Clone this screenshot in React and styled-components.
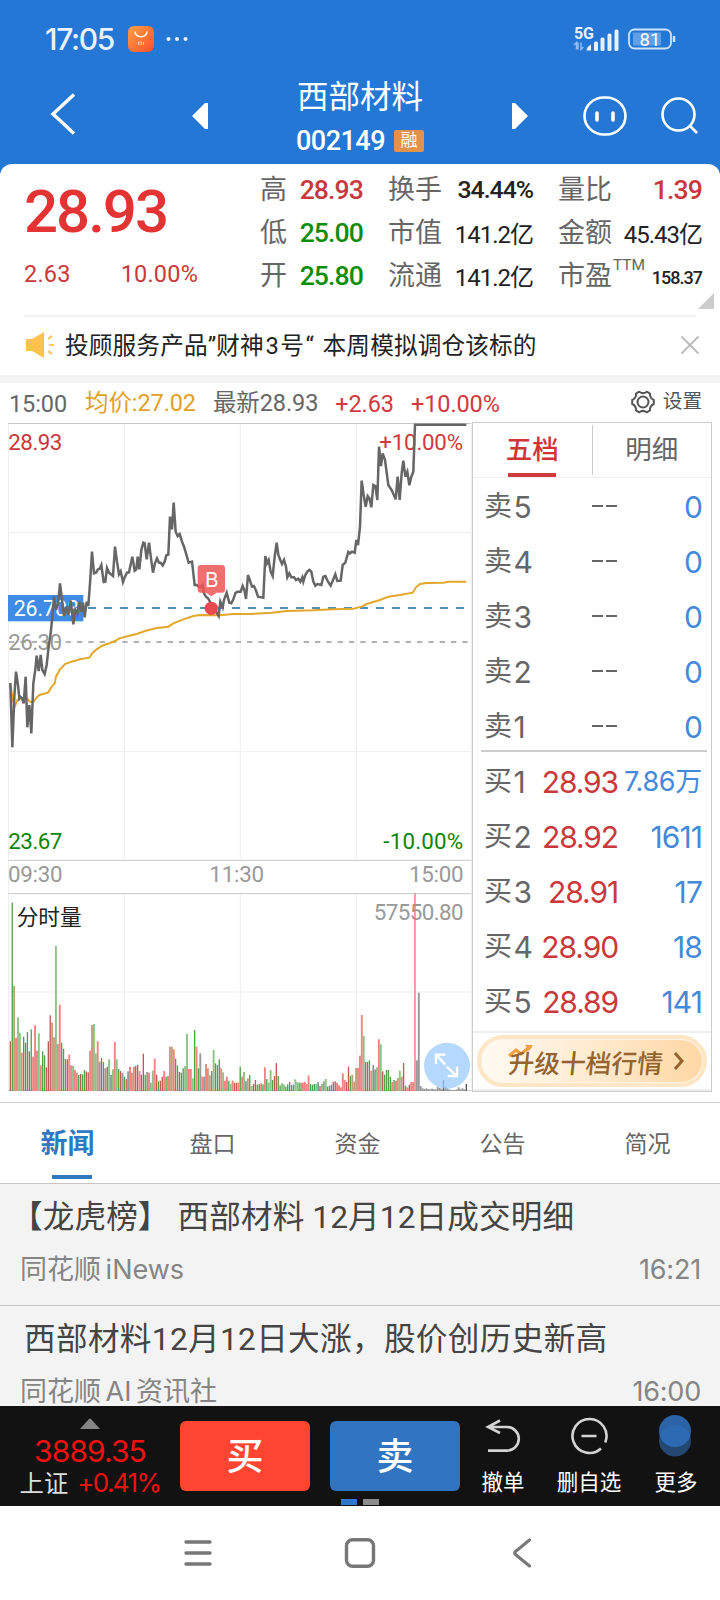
import styled, { createGlobalStyle, css } from 'styled-components';

const GlobalStyle = createGlobalStyle`
  * {
    box-sizing: border-box;
  }

  body {
    margin: 0;
    background: #fff;
    font-family: Roboto, 'Noto Sans CJK SC', sans-serif;
    color: #222;
  }
`;

const uiFont = css`
  font-family: Inter, 'Noto Sans CJK SC', sans-serif;
`;

const Screen = styled.div`
  width: 720px;
  height: 1600px;
  overflow: hidden;
  display: flex;
  flex-direction: column;
  white-space: nowrap;
`;

/* ---------- header ---------- */

const Header = styled.header`
  height: 174px;
  flex: none;
  background: #2577d5;
  color: #fff;
`;

const StatusBar = styled.div`
  height: 76px;
  padding: 2px 44px 0 45px;
  display: flex;
  align-items: center;
  ${uiFont}
`;

const Clock = styled.span`
  width: 83px;
  font-size: 30px;
  font-weight: 500;
  letter-spacing: -1.3px;
  color: #e8f2fd;
`;

const StatusIcons = styled.div`
  margin-left: auto;
  display: flex;
  align-items: center;
  gap: 9px;
`;

const TitleBar = styled.div`
  height: 88px;
  padding: 0 20px 0 50px;
  display: flex;
  align-items: flex-start;
`;

const TitleBlock = styled.div`
  width: 304px;
  padding-top: 2px;
  display: flex;
  flex-direction: column;
  align-items: center;
`;

const StockName = styled.h1`
  margin: -1px 0 1px;
  font-size: 31.5px;
  font-weight: 400;
  line-height: 42px;
`;

const StockCode = styled.div`
  display: flex;
  align-items: center;
  gap: 9px;
  font-size: 27px;
  font-weight: 500;
  line-height: 42px;
  letter-spacing: -0.5px;
`;

const Badge = styled.span`
  width: 30px;
  height: 22px;
  border-radius: 2px;
  background: #e19150;
  font-size: 17px;
  font-weight: 400;
  line-height: 21px;
  letter-spacing: 0;
  text-align: center;
`;

const HeaderIcon = styled.svg`
  flex: none;
  margin-left: ${({ $left }) => $left || 0}px;
  margin-top: ${({ $top }) => $top || 0}px;
`;

/* ---------- quote ---------- */

const Quote = styled.section`
  height: 151px;
  flex: none;
  margin-top: -10px;
  padding: 2px 18px 0 24px;
  border-radius: 12px 12px 0 0;
  background: #fff;
  display: flex;
  position: relative;
`;

const PriceBlock = styled.div`
  width: 236px;
  padding-top: 2px;
  color: #c9393b;
`;

const Price = styled.div`
  height: 86px;
  font-size: 60px;
  font-weight: 500;
  line-height: 88px;
  letter-spacing: -2px;
  color: #e43333;
`;

const Change = styled.div`
  display: flex;
  gap: 50px;
  font-size: 23.5px;
  line-height: 40px;
  letter-spacing: 0.2px;
`;

const Stats = styled.div`
  display: grid;
  grid-template-columns: 103px 145px 144px;
  grid-auto-rows: 43px;
  column-gap: 25px;
`;

const Stat = styled.div`
  display: flex;
  align-items: center;
  justify-content: space-between;
  font-size: 27px;
  color: #666;

  sup {
    align-self: flex-start;
    margin: 4px auto 0 1px;
    font-size: 15.5px;
  }
`;

const statColors = { up: '#c9393b', down: '#0b8f0b' };

const StatValue = styled.span`
  padding-top: ${({ $size }) => ($size < 20 ? 8 : 3)}px;
  font-size: ${({ $size }) => $size || 24}px;
  font-weight: ${({ $tone, $size }) => ($tone || $size ? 500 : 400)};
  letter-spacing: ${({ $tone }) => ($tone ? -0.9 : -1)}px;
  color: ${({ $tone }) => statColors[$tone] || '#222'};
`;

const Corner = styled.svg`
  position: absolute;
  right: 6px;
  bottom: 6px;
`;

const Notice = styled.div`
  height: 60px;
  flex: none;
  margin: 0 24px;
  padding: 0 0 4px 1px;
  border-top: 2px solid #f2f2f2;
  display: flex;
  align-items: center;
  font-size: 23.7px;

  svg {
    position: relative;
    top: 1px;
  }

  svg:last-child {
    margin: 0 -4px 0 auto;
  }
`;

const NoticeText = styled.span`
  margin: -1px 0 0 11px;
  letter-spacing: 0.1px;
  word-spacing: 1px;

  em {
    margin: 0 1.5px;
    font-style: normal;
  }
`;

const Band = styled.div`
  height: 8px;
  flex: none;
  background: #f4f4f4;
`;

/* ---------- chart and order book ---------- */

const ChartHeader = styled.div`
  height: 39px;
  flex: none;
  padding: 2px 18px 0 9px;
  display: flex;
  align-items: center;
  font-size: 23.5px;
  line-height: 34px;
  letter-spacing: -0.1px;
`;

const Legend = styled.span`
  margin-right: ${({ $gap }) => $gap}px;
  margin-top: ${({ $cjk }) => ($cjk ? -1 : 0)}px;
  color: ${({ $color }) => $color || '#666'};
`;

const Settings = styled.div`
  margin: -3px 0 0 auto;
  display: flex;
  align-items: center;
  gap: 8px;
  font-size: 19.7px;
  color: #555;
`;

const Market = styled.section`
  height: 681px;
  flex: none;
  padding-left: 8px;
  display: flex;
  align-items: flex-start;
  border-bottom: 1px solid #ccc;
`;

const OrderBook = styled.div`
  width: 240px;
  height: 670px;
  border: 1px solid #ccc;
  ${uiFont}
`;

const BookTabs = styled.div`
  height: 55px;
  display: flex;
  border-bottom: 1px solid #eee;
`;

const BookTab = styled.div`
  flex: 1;
  margin: 2px 0;
  position: relative;
  font-size: 26.5px;
  line-height: 48px;
  text-align: center;
  font-weight: ${({ $active }) => ($active ? 500 : 400)};
  color: ${({ $active }) => ($active ? '#d03535' : '#666')};

  & + & {
    border-left: 1px solid #ccc;
  }

  &::after {
    content: '';
    display: ${({ $active }) => ($active ? 'block' : 'none')};
    position: absolute;
    left: 35px;
    top: 48px;
    width: 48px;
    height: 4px;
    background: #d03a3f;
  }
`;

const Side = styled.div`
  height: 275px;
  padding: 1px 9px 0 11px;
  position: relative;

  & + &::before {
    content: '';
    position: absolute;
    left: 8px;
    right: 4px;
    top: -3px;
    height: 2px;
    background: #ccc;
  }
`;

const Level = styled.div`
  height: 55px;
  display: grid;
  grid-template-columns: 54px 80px 1fr;
  align-items: center;
  font-size: 30px;
  letter-spacing: -1.4px;
  color: #666;
`;

const LevelName = styled.span`
  display: flex;
  gap: 3px;
  font-size: 28px;
  line-height: 40px;

  span {
    margin-top: -1px;
  }

  b {
    font-weight: 400;
    font-size: 30px;
  }
`;

const LevelPrice = styled.span`
  text-align: right;
  letter-spacing: -1.1px;
  color: ${({ $empty }) => ($empty ? '#666' : '#c9393b')};
`;

const LevelVolume = styled.span`
  text-align: right;
  line-height: 40px;
  font-size: ${({ $small }) => ($small ? 27 : 30)}px;
  letter-spacing: ${({ $small }) => ($small ? -0.3 : -0.9)}px;
  color: #4489da;
`;

const Dashes = styled.span`
  display: inline-flex;
  gap: 3px;
  vertical-align: middle;
  padding-right: 1px;

  &::before,
  &::after {
    content: '';
    width: 11px;
    height: 2px;
    margin-top: -4px;
    background: #666;
  }
`;

const Upgrade = styled.div`
  height: 60px;
  margin-top: 3px;
  padding: 2px 4px 0;
  border-top: 2px solid #eee;
  border-bottom: 2px solid #eee;
`;

const UpgradeButton = styled.button`
  width: 230px;
  height: 52px;
  padding: 0 0 0 10px;
  border: 4px solid #fde6c5;
  border-radius: 26px;
  background: linear-gradient(90deg, #fffaf3, #ffe9cb 55%, #ffd7a3);
  background-clip: padding-box;
  box-shadow: inset 0 0 0 1px #fff5e6;
  display: flex;
  align-items: center;
  justify-content: center;
  gap: 9px;
  font-family: 'Noto Sans CJK SC', sans-serif;
  font-size: 25.7px;
  font-weight: 500;
  color: #946330;
  position: relative;
`;

const UpgradeText = styled.span`
  transform: skewX(-6deg);
`;

const Spark = styled.svg`
  position: absolute;
  left: 27px;
  top: 5px;
`;

/* ---------- news ---------- */

const NewsTabs = styled.nav`
  height: 81px;
  flex: none;
  display: flex;
  border-bottom: 1px solid #c6c6c6;
`;

const NewsTab = styled.div`
  width: 145px;
  flex: none;
  margin-left: ${({ $active }) => ($active ? -5 : 0)}px;
  display: flex;
  flex-direction: column;
  align-items: center;
  font-size: ${({ $active }) => ($active ? 27 : 23)}px;
  font-weight: ${({ $active }) => ($active ? 700 : 400)};
  line-height: 83px;
  color: ${({ $active }) => ($active ? '#3078bf' : '#666')};

  &::after {
    content: '';
    width: 40px;
    height: 4px;
    margin: -11px -8px 0 0;
    background: ${({ $active }) => ($active ? '#3078bf' : 'transparent')};
  }
`;

const NewsList = styled.section`
  height: 222px;
  flex: none;
  overflow: hidden;
  background: #f3f3f3;
`;

const NewsItem = styled.article`
  height: 121.5px;
  padding: 10px 19px 0 20px;
  border-bottom: 1px solid #c4c4c4;
`;

const NewsTitle = styled.h2`
  margin: 0 0 0 ${({ $indent }) => $indent}px;
  font-size: 31.6px;
  font-weight: 400;
  line-height: 48px;
  letter-spacing: ${({ $spacing }) => $spacing}px;
  color: #444;
`;

const NewsMeta = styled.div`
  padding-top: 5px;
  display: flex;
  justify-content: space-between;
  font-size: 27px;
  line-height: 46px;
  color: #858585;
  ${uiFont}

  span:first-child {
    word-spacing: -3px;
  }

  span:last-child {
    letter-spacing: -0.2px;
  }
`;

/* ---------- bottom bars ---------- */

const TradeBar = styled.footer`
  height: 100px;
  flex: none;
  padding-left: 20px;
  background: #121212;
  color: #fff;
  display: flex;
  position: relative;
`;

const IndexBlock = styled.div`
  width: 160px;
  padding: 12px 20px 0 0;
  display: flex;
  flex-direction: column;
  align-items: center;
  ${uiFont}
`;

const IndexValue = styled.div`
  font-size: 30px;
  line-height: 38px;
  margin-top: 3px;
  letter-spacing: -0.9px;
  color: #f01010;
`;

const IndexChange = styled.div`
  display: flex;
  gap: 9px;
  font-size: 24.3px;
  line-height: 26px;
  color: #ddd;

  span {
    font-size: 26px;
    letter-spacing: -1.6px;
    color: #f01010;
  }
`;

const TradeButton = styled.button`
  width: 130px;
  height: 70px;
  margin: 15px 20px 0 0;
  padding: 0 0 4px;
  border: 0;
  border-radius: 6px;
  background: ${({ $sell }) => ($sell ? '#3174c1' : '#ff4432')};
  color: #fff;
  font-family: 'Noto Sans CJK SC', sans-serif;
  font-size: 37px;
  font-weight: 500;
`;

const Action = styled.div`
  width: ${({ $width }) => $width}px;
  padding-top: 8px;
  display: flex;
  flex-direction: column;
  align-items: center;
  gap: 7px;
  font-size: 21.5px;
  line-height: 36px;
`;

const PageMarks = styled.div`
  position: absolute;
  left: 341px;
  bottom: 1px;
  display: flex;
  gap: 6px;

  i {
    width: 16px;
    height: 6px;
    background: #8c8c8c;
  }

  i:first-child {
    background: #3077c8;
  }
`;

const SystemNav = styled.div`
  height: 94px;
  flex: none;
  display: flex;
  align-items: center;
  padding: 0 0 1px 183px;
  gap: 131px;
`;

/* ---------- data ---------- */

const stats = [
  { label: '高', value: '28.93', tone: 'up', size: 26.6 },
  { label: '换手', value: '34.44%', size: 24.8 },
  { label: '量比', value: '1.39', tone: 'up', size: 26.6 },
  { label: '低', value: '25.00', tone: 'down', size: 26.6 },
  { label: '市值', value: '141.2亿' },
  { label: '金额', value: '45.43亿' },
  { label: '开', value: '25.80', tone: 'down', size: 26.6 },
  { label: '流通', value: '141.2亿' },
  { label: '市盈', note: 'TTM', value: '158.37', size: 18 },
];

const sells = ['5', '4', '3', '2', '1'];

const buys = [
  ['1', '28.93', '7.86万'],
  ['2', '28.92', '1611'],
  ['3', '28.91', '17'],
  ['4', '28.90', '18'],
  ['5', '28.89', '141'],
];

const priceLine =
  '31,909 37,1102 43,950 48,875 54,915 58,955 61,950 66,955 71,970 77,890 82,1042 88,975 94,1060 100,910 106,868 110,827 116,873 122,825 127,870 134,882 140,855 146,800 152,760 156,720 162,650 168,690 174,672 180,610 186,660 192,708 198,680 205,705 212,662 220,733 226,690 232,703 238,665 244,695 249,668 254,712 260,665 265,678 270,610 276,515 282,580 288,578 294,568 299,566 304,555 311,606 316,605 321,564 327,578 333,583 339,588 345,500 351,545 357,583 362,574 369,606 375,590 381,578 387,577 391,558 397,530 404,572 409,568 413,530 418,568 424,510 430,488 434,490 440,538 447,488 453,535 459,578 465,550 471,535 477,548 482,548 488,556 494,545 499,526 505,524 510,410 516,448 521,368 527,455 533,468 539,462 546,485 552,500 558,520 566,548 576,545 584,615 590,615 596,620 602,622 608,615 612,640 618,650 624,655 630,665 636,685 645,690 656,708 661,665 668,682 672,660 680,638 688,668 694,670 700,658 706,640 712,635 722,635 728,618 733,630 738,657 744,585 750,602 756,620 762,618 768,632 774,650 790,653 796,528 801,550 806,540 812,575 818,588 824,530 830,488 835,525 840,538 846,552 852,540 858,560 862,592 868,580 874,592 882,592 888,600 895,596 901,605 907,592 910,605 916,585 922,575 928,570 934,575 940,605 946,617 952,612 964,615 970,590 976,588 984,605 992,617 1000,598 1006,583 1012,603 1022,602 1028,555 1036,548 1045,516 1050,520 1056,515 1064,518 1069,480 1074,495 1080,440 1085,302 1091,345 1097,380 1103,348 1108,355 1114,382 1120,315 1126,318 1132,360 1137,200 1143,258 1148,220 1155,240 1165,315 1175,330 1187,358 1193,290 1199,360 1205,280 1210,242 1216,290 1222,275 1228,316 1234,290 1240,275 1245,134 1399,134';

const averageLine =
  '31,910 38,960 45,978 52,960 62,955 80,955 90,965 100,966 108,955 118,945 130,942 145,937 155,920 164,910 168,890 180,868 195,852 215,845 240,838 268,833 278,818 290,808 305,798 330,789 345,783 358,775 385,768 410,762 435,753 470,744 505,740 520,730 550,718 580,708 600,705 660,706 700,702 755,702 815,698 860,693 940,691 1000,688 1060,686 1085,680 1100,672 1140,660 1165,650 1200,645 1238,638 1248,622 1260,612 1280,609 1330,608 1345,605 1399,605';

// one entry per minute: tone letter, then distance of the bar's top from the pane's origin
const volumes =
  'r484 g68 b318 p474 l412 l458 p518 g470 r488 g456 r514 g448 p530 p436 p512 l460 p556 g514 g526 r562 r484 r406 b428 b472 l198 p492 p374 g488 g506 g537 r538 p524 p556 l557 p570 p578 g585 r582 g583 g570 r574 r577 p512 b435 l432 l520 p484 k545 r534 g546 k565 r560 l538 k585 l568 p486 l538 g567 r573 k578 g590 r597 k574 p560 b578 p561 r558 r554 p573 r584 r521 g584 g576 p578 l608 l572 p536 r584 g604 r602 r590 p573 g590 p588 b500 b500 p508 g536 g556 r576 g578 g565 l558 l462 p567 p567 l595 g450 p500 g565 k520 p590 k590 p552 b565 b586 g573 l510 g550 g555 g538 p565 l577 p602 p590 g602 l612 p602 r608 r608 p608 g560 p590 l576 k604 b595 g585 l618 r612 r600 g614 g612 p610 g613 p562 g597 l608 l570 g600 r588 r549 g588 g616 l610 l613 g620 g613 r606 g615 g614 l598 l606 g608 g608 p608 p606 p612 p586 g612 g614 g612 l612 k606 r618 l612 k604 l597 g620 g618 g614 r606 r604 p608 p616 p622 p580 p600 r606 r560 g588 b584 b605 b564 p564 p527 p405 l468 r546 r546 g541 p572 g555 k568 l562 p478 l493 r574 g584 g570 g570 g590 p606 g600 p602 b594 l572 p590 r549 g617 p622 r614 p606 p606 P40 k541 k338 k618 k625 k627 k625 k627 k628 k626 k628 k628 k620 k624 k626 d600 k620 k625 k628 k630 k630 k630 k628 k622 k628 k625 k628 d612'.split(
    ' ',
  );

const volumeColors = {
  r: '#bd5b55',
  p: '#f08482',
  P: '#e77476',
  g: '#4fa047',
  l: '#8cc386',
  b: '#c29f7b',
  k: '#999',
  d: '#555',
};

// the limit-up minute sits on a known slot, so the bars are spread from both ends of it
const limitUp = volumes.indexOf('P40');

function barX(index) {
  if (index <= limitUp) return 31 + (index * 1214) / limitUp;
  return 1245 + ((index - limitUp) * 154) / (volumes.length - 1 - limitUp);
}

function StockChart() {
  return (
    <svg width="464" height="669" viewBox="24 126 1392 2007">
      <g fill="none" stroke="#efefef" strokeWidth="3">
        <path d="M25.5 130V2132M373 130V1441M721 130V1441M1069 130V1441M1414 130V2132" />
        <path d="M373 1541V2132M721 1541V2132M1069 1541V2132" />
        <path d="M25 458H1414M25 1114H1414M25 1836H1414" />
      </g>
      <path d="M25 130.5H1414M25 1441H1414M25 1541H1414M25 2131.5H1414" stroke="#c8c8c8" strokeWidth="3" />

      <g fontFamily="Roboto, sans-serif" fontSize="67">
        <text x="25" y="210" textLength="162" fill="#c9393b">28.93</text>
        <text x="1138" y="210" textLength="251" fill="#d03a3c">+10.00%</text>
        <text x="25" y="1408" textLength="162" fill="#0b850b">23.67</text>
        <text x="1150" y="1408" textLength="239" fill="#0b850b">-10.00%</text>
        <g fill="#999">
          <text x="24" y="1507" textLength="164">09:30</text>
          <text x="628" y="1507" textLength="164">11:30</text>
          <text x="1227" y="1507" textLength="164">15:00</text>
          <text x="1121" y="1621" textLength="270">57550.80</text>
          <text x="25" y="809" textLength="161">26.30</text>
        </g>
      </g>

      <rect x="24" y="645" width="226" height="79" fill="#3f8ce8" />
      <text x="41" y="707" fontFamily="Roboto, sans-serif" fontSize="64" textLength="196" fill="#fff">
        26.708
      </text>
      <path d="M264 684H1396" stroke="#528fb4" strokeWidth="6" strokeDasharray="24 24" />
      <path d="M27 786H1414" stroke="#999" strokeWidth="5" strokeDasharray="16 18" />

      <polyline points={averageLine} fill="none" stroke="#e3a72c" strokeWidth="6" />
      <polyline points={priceLine} fill="none" stroke="#666" strokeWidth="7.5" />

      <path
        d="M602 555h64q9 0 9 9v65q0 9-9 9h-16l-16 11-16-11h-16q-9 0-9-9v-65q0-9 9-9z"
        fill="#ee5555"
        fillOpacity=".85"
      />
      <text x="635" y="620" textAnchor="middle" fontFamily="Inter, sans-serif" fontSize="62" fill="#fff">
        B
      </text>
      <circle cx="634" cy="685" r="20" fill="#e84a50" />

      {volumes.map((entry, index) => {
        const tone = entry[0];
        const top = 1500 + Number(entry.slice(1));
        const width = 'rgdP'.includes(tone) ? 4 : 5.7;
        return (
          <rect
            key={index}
            x={barX(index) - width / 2}
            y={top}
            width={width}
            height={2133 - top}
            fill={volumeColors[tone]}
          />
        );
      })}
      <text x="50" y="1635" fontFamily="'Noto Sans CJK SC', sans-serif" fontSize="65" fill="#222">
        分时量
      </text>

      <circle cx="1341" cy="2057" r="69" fill="#9ccbfd" fillOpacity=".75" />
      <path
        d="M1308 2052v-28h28M1310 2026l26 28M1343 2088h28v-28M1340 2060l28 26"
        fill="none"
        stroke="#fff"
        strokeWidth="7"
      />
    </svg>
  );
}

function StatusBarRow() {
  return (
    <StatusBar>
      <Clock>17:05</Clock>
      <svg width="26" height="26" viewBox="0 0 26 26">
        <defs>
          <linearGradient id="mall" x1="0" y1="0" x2="1" y2="1">
            <stop offset="0" stopColor="#ff9f43" />
            <stop offset="1" stopColor="#f9502d" />
          </linearGradient>
        </defs>
        <rect width="26" height="26" rx="6" fill="url(#mall)" />
        <path d="M7 5.5c1 7 11 7 12 0" fill="none" stroke="#fff" strokeWidth="1.6" />
        <path d="M10.5 19v-3h3v3M15.5 16v3M12 17.5V19" fill="none" stroke="#ffd9bd" strokeWidth=".8" />
      </svg>
      <HeaderIcon $left={12} width="24" height="6" fill="#e8f2fd">
        <circle cx="2.5" cy="3" r="2" />
        <circle cx="11" cy="3" r="2" />
        <circle cx="19.5" cy="3" r="2" />
      </HeaderIcon>
      <StatusIcons>
        <svg width="46" height="26" viewBox="0 0 46 26" fill="#e8f2fd">
          <text x="1" y="12.5" fontSize="16" fontWeight="700" fontFamily="Roboto, sans-serif" textLength="20">
            5G
          </text>
          <path d="M3.5 23.5v-7l-2.5 2.5M5 16.5v7M8 16.5v7l2.5-2.5" fill="none" stroke="#8fbcf0" strokeWidth="1.5" />
          <path d="M18 18.5v6h-4.5q.5-4 4.5-6z" />
          <rect x="21" y="15.5" width="4" height="9.5" rx="1.5" />
          <rect x="27.5" y="11.5" width="4" height="13.5" rx="1.5" />
          <rect x="34.5" y="7.5" width="4" height="17.5" rx="1.5" />
          <rect x="41.5" y="3.5" width="4" height="21.5" rx="1.5" />
        </svg>
        <svg width="48" height="22" viewBox="0 0 48 22">
          <rect x="1" y="1.5" width="42" height="19" rx="5.5" fill="none" stroke="#cfe3fa" strokeWidth="1.8" />
          <rect x="5" y="4.5" width="28" height="13" rx="1" fill="#5f9fe6" />
          <path d="M46 8v6" stroke="#cfe3fa" strokeWidth="2.5" />
          <text x="22" y="17.5" textAnchor="middle" fontSize="18.5" fill="#fff" fontFamily="Roboto, sans-serif">
            81
          </text>
        </svg>
      </StatusIcons>
    </StatusBar>
  );
}

function App() {
  return (
    <>
      <GlobalStyle />
      <Screen>
        <Header>
          <StatusBarRow />
          <TitleBar>
            <HeaderIcon $top={15} width="26" height="46" viewBox="0 0 26 46">
              <path d="M24 3.5L3 23L24 42.5" fill="none" stroke="#fff" strokeWidth="3.4" />
            </HeaderIcon>
            <HeaderIcon $left={116} $top={27} width="16" height="26">
              <path d="M0 13L13 0h3v26h-3z" fill="#fff" />
            </HeaderIcon>
            <TitleBlock>
              <StockName>西部材料</StockName>
              <StockCode>
                002149
                <Badge>融</Badge>
              </StockCode>
            </TitleBlock>
            <HeaderIcon $top={27} width="16" height="26">
              <path d="M16 13L3 0H0v26h3z" fill="#fff" />
            </HeaderIcon>
            <HeaderIcon $left={55} $top={20} width="44" height="40" viewBox="0 0 44 40">
              <rect x="1.5" y="1.5" width="41" height="37" rx="19.5" fill="none" stroke="#fff" strokeWidth="2.6" />
              <path d="M14 17v7M30 17v7" stroke="#fff" strokeWidth="3.6" strokeLinecap="round" />
            </HeaderIcon>
            <HeaderIcon $left={34} $top={21} width="38" height="38" viewBox="0 0 38 38">
              <circle cx="17.5" cy="17.5" r="16" fill="none" stroke="#fff" strokeWidth="2.6" />
              <path d="M28.5 28.5l7.5 7.5" stroke="#fff" strokeWidth="2.6" />
            </HeaderIcon>
          </TitleBar>
        </Header>

        <Quote>
          <PriceBlock>
            <Price>28.93</Price>
            <Change>
              <span>2.63</span>
              <span>10.00%</span>
            </Change>
          </PriceBlock>
          <Stats>
            {stats.map(({ label, note, value, tone, size }) => (
              <Stat key={label}>
                {label}
                {note && <sup>{note}</sup>}
                <StatValue $tone={tone} $size={size}>
                  {value}
                </StatValue>
              </Stat>
            ))}
          </Stats>
          <Corner width="16" height="16">
            <path d="M16 0v16H0z" fill="#ccc" />
          </Corner>
        </Quote>

        <Notice>
          <svg width="29" height="26" viewBox="0 0 29 26">
            <path d="M1 7h6L19 0v26L7 19H1z" fill="#fdc14e" />
            <path d="M23 7l4-3M24 13h5M23 19l4 3" stroke="#fdc870" strokeWidth="2.2" />
          </svg>
          <NoticeText>
            投顾服务产品”财神<em>3</em>号<em>“</em> 本周模拟调仓该标的
          </NoticeText>
          <svg width="20" height="20" viewBox="0 0 20 20">
            <path d="M1.5 1.5l17 17M18.5 1.5l-17 17" stroke="#bbb" strokeWidth="1.8" />
          </svg>
        </Notice>
        <Band />

        <ChartHeader>
          <Legend $gap={18}>15:00</Legend>
          <Legend $gap={17} $cjk $color="#dfa11f">
            均价:27.02
          </Legend>
          <Legend $gap={17} $cjk>
            最新28.93
          </Legend>
          <Legend $gap={17} $color="#d03a3c">
            +2.63
          </Legend>
          <Legend $color="#d03a3c">+10.00%</Legend>
          <Settings>
            <svg width="24" height="24" viewBox="0 0 24 24" fill="none" stroke="#555" strokeWidth="2">
              <path
                d="M8.3 1.7Q12 4.5 15.7 1.7L19 3.6Q18.6 8 22.8 10V14Q18.6 16 19 20.4L15.7 22.3Q12 19.5 8.3 22.3L5 20.4Q5.4 16 1.2 14V10Q5.4 8 5 3.6Z"
                strokeLinejoin="round"
              />
              <circle cx="12" cy="12" r="5.5" />
            </svg>
            设置
          </Settings>
        </ChartHeader>

        <Market>
          <StockChart />
          <OrderBook>
            <BookTabs>
              <BookTab $active>五档</BookTab>
              <BookTab>明细</BookTab>
            </BookTabs>
            <Side>
              {sells.map((level) => (
                <Level key={level}>
                  <LevelName>
                    <span>卖</span>
                    <b>{level}</b>
                  </LevelName>
                  <LevelPrice $empty>
                    <Dashes />
                  </LevelPrice>
                  <LevelVolume>0</LevelVolume>
                </Level>
              ))}
            </Side>
            <Side>
              {buys.map(([level, price, volume]) => (
                <Level key={level}>
                  <LevelName>
                    <span>买</span>
                    <b>{level}</b>
                  </LevelName>
                  <LevelPrice>{price}</LevelPrice>
                  <LevelVolume $small={volume.includes('万')}>{volume}</LevelVolume>
                </Level>
              ))}
            </Side>
            <Upgrade>
              <UpgradeButton>
                <Spark width="26" height="14" viewBox="0 0 26 14">
                  <path d="M1 12l7-6 5 4 10-8" fill="none" stroke="#f0a040" strokeWidth="3" />
                  <path d="M17 1h8l-4 6z" fill="#f0a040" />
                </Spark>
                <UpgradeText>升级十档行情</UpgradeText>
                <svg width="12" height="18" viewBox="0 0 12 18">
                  <path d="M2 1l7 8-7 8" fill="none" stroke="#946330" strokeWidth="3" />
                </svg>
              </UpgradeButton>
            </Upgrade>
          </OrderBook>
        </Market>

        <NewsTabs>
          <NewsTab $active>新闻</NewsTab>
          <NewsTab>盘口</NewsTab>
          <NewsTab>资金</NewsTab>
          <NewsTab>公告</NewsTab>
          <NewsTab>简况</NewsTab>
        </NewsTabs>

        <NewsList>
          <NewsItem>
            <NewsTitle $indent={-9} $spacing={0.12}>
              【龙虎榜】 西部材料 12月12日成交明细
            </NewsTitle>
            <NewsMeta>
              <span>同花顺 iNews</span>
              <span>16:21</span>
            </NewsMeta>
          </NewsItem>
          <NewsItem>
            <NewsTitle $indent={4} $spacing={0.35}>
              西部材料12月12日大涨，股价创历史新高
            </NewsTitle>
            <NewsMeta>
              <span>同花顺 AI 资讯社</span>
              <span>16:00</span>
            </NewsMeta>
          </NewsItem>
        </NewsList>

        <TradeBar>
          <IndexBlock>
            <svg width="20" height="11">
              <path d="M9 1q1-1 2 0l9 10H0z" fill="#858585" />
            </svg>
            <IndexValue>3889.35</IndexValue>
            <IndexChange>
              上证<span>+0.41%</span>
            </IndexChange>
          </IndexBlock>
          <TradeButton>买</TradeButton>
          <TradeButton $sell>卖</TradeButton>
          <Action $width={46}>
            <svg width="38" height="44" viewBox="0 0 38 44" fill="none" stroke="#d4d4d4" strokeWidth="2.6">
              <path d="M16 6.5L4 13l12 6M5 13h18a11.8 11.8 0 0 1 0 23.6H4" />
            </svg>
            撤单
          </Action>
          <Action $width={126}>
            <svg width="38" height="44" viewBox="0 0 38 44" fill="none" stroke="#d4d4d4" strokeWidth="2.6">
              <path d="M31 34.5A17 17 0 1 1 35.2 28.5M11.5 22h15" />
            </svg>
            删自选
          </Action>
          <Action $width={48}>
            <svg width="34" height="44" viewBox="0 0 34 44">
              <circle cx="16" cy="26.5" r="16" fill="#244872" />
              <circle cx="16" cy="17" r="16" fill="#2c62a6" />
              <path d="M.7 21.75a16 16 0 0 1 30.6 0a16 16 0 0 1-30.6 0" fill="#2e69b3" />
            </svg>
            更多
          </Action>
          <PageMarks>
            <i />
            <i />
          </PageMarks>
        </TradeBar>

        <SystemNav>
          <svg width="30" height="28" viewBox="0 0 30 28">
            <path d="M3 3h24M3 14h24M3 25h24" stroke="#777" strokeWidth="3.4" strokeLinecap="round" />
          </svg>
          <svg width="32" height="30" viewBox="0 0 32 30">
            <rect x="2.5" y="1.8" width="27" height="26.4" rx="6" fill="none" stroke="#777" strokeWidth="3.4" />
          </svg>
          <svg width="24" height="30" viewBox="0 0 24 30">
            <path d="M22.5 2L8.5 13.5q-1.8 1.5 0 3L22.5 28" fill="none" stroke="#777" strokeWidth="3" strokeLinecap="round" />
          </svg>
        </SystemNav>
      </Screen>
    </>
  );
}

export default App;
